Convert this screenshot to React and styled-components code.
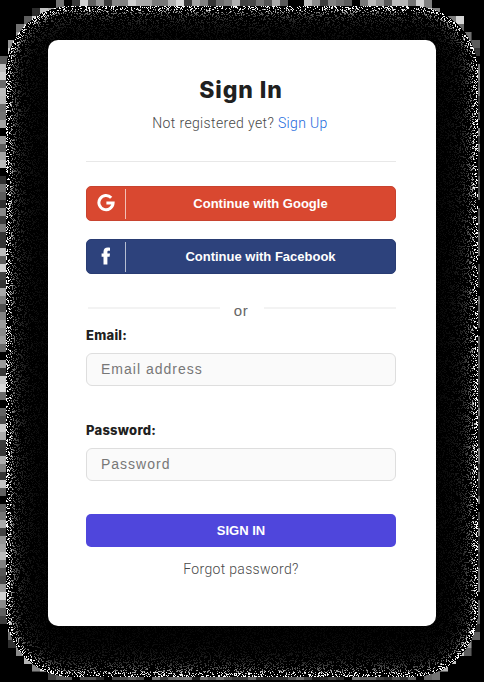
import React, { useLayoutEffect, useRef } from 'react';
import styled, { createGlobalStyle } from 'styled-components';

const GlobalStyle = createGlobalStyle`
  *, *::before, *::after { box-sizing: border-box; }
  html, body { margin: 0; padding: 0; background: #000; overflow: hidden; }
`;

const WIDTH = 484;
const HEIGHT = 682;

const Page = styled.main`
  position: relative;
  width: ${WIDTH}px;
  height: ${HEIGHT}px;
  padding: 40px 48px 56px;
  background: #000;
  font-family: Roboto, 'Liberation Sans', sans-serif;
`;

const Backdrop = styled.canvas`
  position: absolute;
  inset: 0;
  display: block;
`;

const Card = styled.section`
  position: relative;
  display: flex;
  flex-direction: column;
  width: 388px;
  height: 586px;
  padding: 34px 40px 0 38px;
  border-radius: 10px;
  background: #fff;
`;

const Header = styled.header`
  display: flex;
  flex-direction: column;
  align-items: center;
  height: 88px;
  border-bottom: 1px solid #e8e8e8;
`;

const Title = styled.h1`
  margin: 0;
  font: 800 23px/32px Inter, sans-serif;
  letter-spacing: 0.9px;
  color: #202020;
`;

const Prompt = styled.p`
  margin: 7px 2px 0 0;
  font: 300 14px/20px Roboto, sans-serif;
  letter-spacing: 0.36px;
  color: #484848;
  white-space: nowrap;
`;

const Link = styled.a`
  color: #2068dc;
  text-decoration: none;
`;

const Providers = styled.div`
  display: flex;
  flex-direction: column;
  gap: 18px;
  margin-top: 24px;
`;

const ProviderButton = styled.button`
  display: flex;
  align-items: center;
  width: 310px;
  height: 35px;
  padding: 0;
  border: 1px solid ${(p) => p.$edge};
  border-radius: 5px;
  background: ${(p) => p.$fill};
  color: #fff;
  font: 700 13px/16px 'Liberation Sans', sans-serif;
`;

const IconCell = styled.span`
  display: flex;
  align-items: center;
  justify-content: center;
  width: 39px;
  height: 30px;
  padding-bottom: 2px;
  border-right: 1px solid rgba(255, 255, 255, 0.65);
`;

const ProviderLabel = styled.span`
  flex: 1;
  text-align: center;
`;

const OrRow = styled.div`
  display: flex;
  align-items: center;
  height: 22px;
  margin: 26px 0 4px 2px;
  color: #666;
  font: 400 15px/22px 'Liberation Sans', sans-serif;
`;

const Rule = styled.span`
  flex: 0 0 132px;
  height: 2px;
  margin-bottom: 7px;
  background: #f3f3f3;
`;

const OrText = styled.span`
  flex: 1;
  padding-right: 2px;
  text-align: center;
  letter-spacing: 0.5px;
`;

const Field = styled.label`
  display: flex;
  flex-direction: column;
  height: 95px;
`;

const FieldName = styled.span`
  height: 27px;
  font: 800 13px/18px Inter, sans-serif;
  letter-spacing: 0.25px;
  color: #202020;
`;

const Input = styled.input`
  width: 310px;
  height: 33px;
  padding: 0 14px 1px;
  border: 1px solid #dedede;
  border-radius: 6px;
  outline: none;
  background: #fafafa;
  font: 400 14px/18px 'Liberation Sans', sans-serif;
  letter-spacing: 1px;
  &::placeholder { color: #777; opacity: 1; }
`;

const SubmitButton = styled.button`
  width: 310px;
  height: 33px;
  margin-top: -2px;
  padding: 0;
  border: 0;
  border-radius: 5px;
  background: #4f46dc;
  color: #fff;
  font: 700 13px/16px 'Liberation Sans', sans-serif;
`;

const Forgot = styled.a`
  margin-top: 12px;
  text-align: center;
  font: 300 14px/20px Roboto, sans-serif;
  letter-spacing: 0.32px;
  color: #484848;
`;

// Small seeded generator, so the grain is the same on every paint.
function createRandom(seed) {
  let s = seed;
  return () => {
    s = (s + 0x6d2b79f5) | 0;
    let t = Math.imul(s ^ (s >>> 15), 1 | s);
    t = (t + Math.imul(t ^ (t >>> 7), 61 | t)) ^ t;
    return ((t ^ (t >>> 14)) >>> 0) / 4294967296;
  };
}

// Depth inside the rounded halo; negative outside it.
function haloDepth(x, y) {
  const r = 66;
  const qx = Math.abs(x - 242) - (236 - r);
  const qy = Math.abs(y - 341.5) - (335.5 - r);
  const outside = Math.hypot(Math.max(qx, 0), Math.max(qy, 0));
  return r - outside - Math.min(Math.max(qx, qy), 0);
}

function paintHalo(canvas) {
  const ctx = canvas.getContext('2d');
  const random = createRandom(73);
  const image = ctx.createImageData(WIDTH, HEIGHT);
  const columns = Math.ceil(WIDTH / 8);
  const blocks = Array.from({ length: columns * 86 }, () =>
    random() < 0.12 ? 0 : 45 + random() * 175);
  for (let y = 0; y < HEIGHT; y += 1) {
    for (let x = 0; x < WIDTH; x += 1) {
      const bx = Math.floor(x / 8);
      const by = Math.floor(y / 8);
      const depth = haloDepth(x + 0.5, y + 0.5);
      const grain = random();
      let v = 0;
      if (depth > 0) {
        const alpha = Math.max(1, 0.5 + (depth / 4.8) ** 1.6 + (random() - 0.5) * 1.2);
        if (grain < 0.28) v = 255 / alpha;
      } else if (x < 480 && y < 680) {
        const nx = Math.min(Math.max(242, bx * 8), bx * 8 + 8);
        const ny = Math.min(Math.max(341, by * 8), by * 8 + 8);
        if (haloDepth(nx, ny) > 0.5) {
          v = blocks[by * columns + bx];
          if (x > 470 || y > 670) v *= 0.55;
        }
      }
      const i = (y * WIDTH + x) * 4;
      image.data[i] = v;
      image.data[i + 1] = v;
      image.data[i + 2] = v;
      image.data[i + 3] = 255;
    }
  }
  ctx.putImageData(image, 0, 0);
}

function GrainBackdrop() {
  const ref = useRef(null);
  useLayoutEffect(() => paintHalo(ref.current), []);
  return <Backdrop ref={ref} width={WIDTH} height={HEIGHT} aria-hidden="true" />;
}

function GoogleIcon() {
  return (
    <svg width="18" height="18" viewBox="0 0 18 18" fill="none" aria-hidden="true">
      <path d="M14.2 3.8A7.1 7.1 0 1 0 16.1 9H9.4" stroke="#fff" strokeWidth="3" />
    </svg>
  );
}

function FacebookIcon() {
  return (
    <svg width="10" height="18" viewBox="0 0 10 18" aria-hidden="true">
      <path fill="#fff" d="M2.5 17.5V9.8H.6V6.6h1.9V4.9C2.5 1.9 4.100.5 6.800.5c1 0 1.700.1 2.200.2v3H7.700c-1 0-1.300.5-1.300 1.300v1.600H9l-.4 3.200H6.400v7.700z" />
    </svg>
  );
}

export default function App() {
  return (
    <Page>
      <GlobalStyle />
      <GrainBackdrop />
      <Card>
        <Header>
          <Title>Sign In</Title>
          <Prompt>Not registered yet? <Link>Sign Up</Link></Prompt>
        </Header>
        <Providers>
          <ProviderButton $fill="#d94830" $edge="#c8432f">
            <IconCell><GoogleIcon /></IconCell>
            <ProviderLabel>Continue with Google</ProviderLabel>
          </ProviderButton>
          <ProviderButton $fill="#2d427c" $edge="#293c73">
            <IconCell><FacebookIcon /></IconCell>
            <ProviderLabel>Continue with Facebook</ProviderLabel>
          </ProviderButton>
        </Providers>
        <OrRow>
          <Rule />
          <OrText>or</OrText>
          <Rule />
        </OrRow>
        <Field>
          <FieldName>Email:</FieldName>
          <Input type="email" placeholder="Email address" />
        </Field>
        <Field>
          <FieldName>Password:</FieldName>
          <Input type="password" placeholder="Password" />
        </Field>
        <SubmitButton>SIGN IN</SubmitButton>
        <Forgot>Forgot password?</Forgot>
      </Card>
    </Page>
  );
}
